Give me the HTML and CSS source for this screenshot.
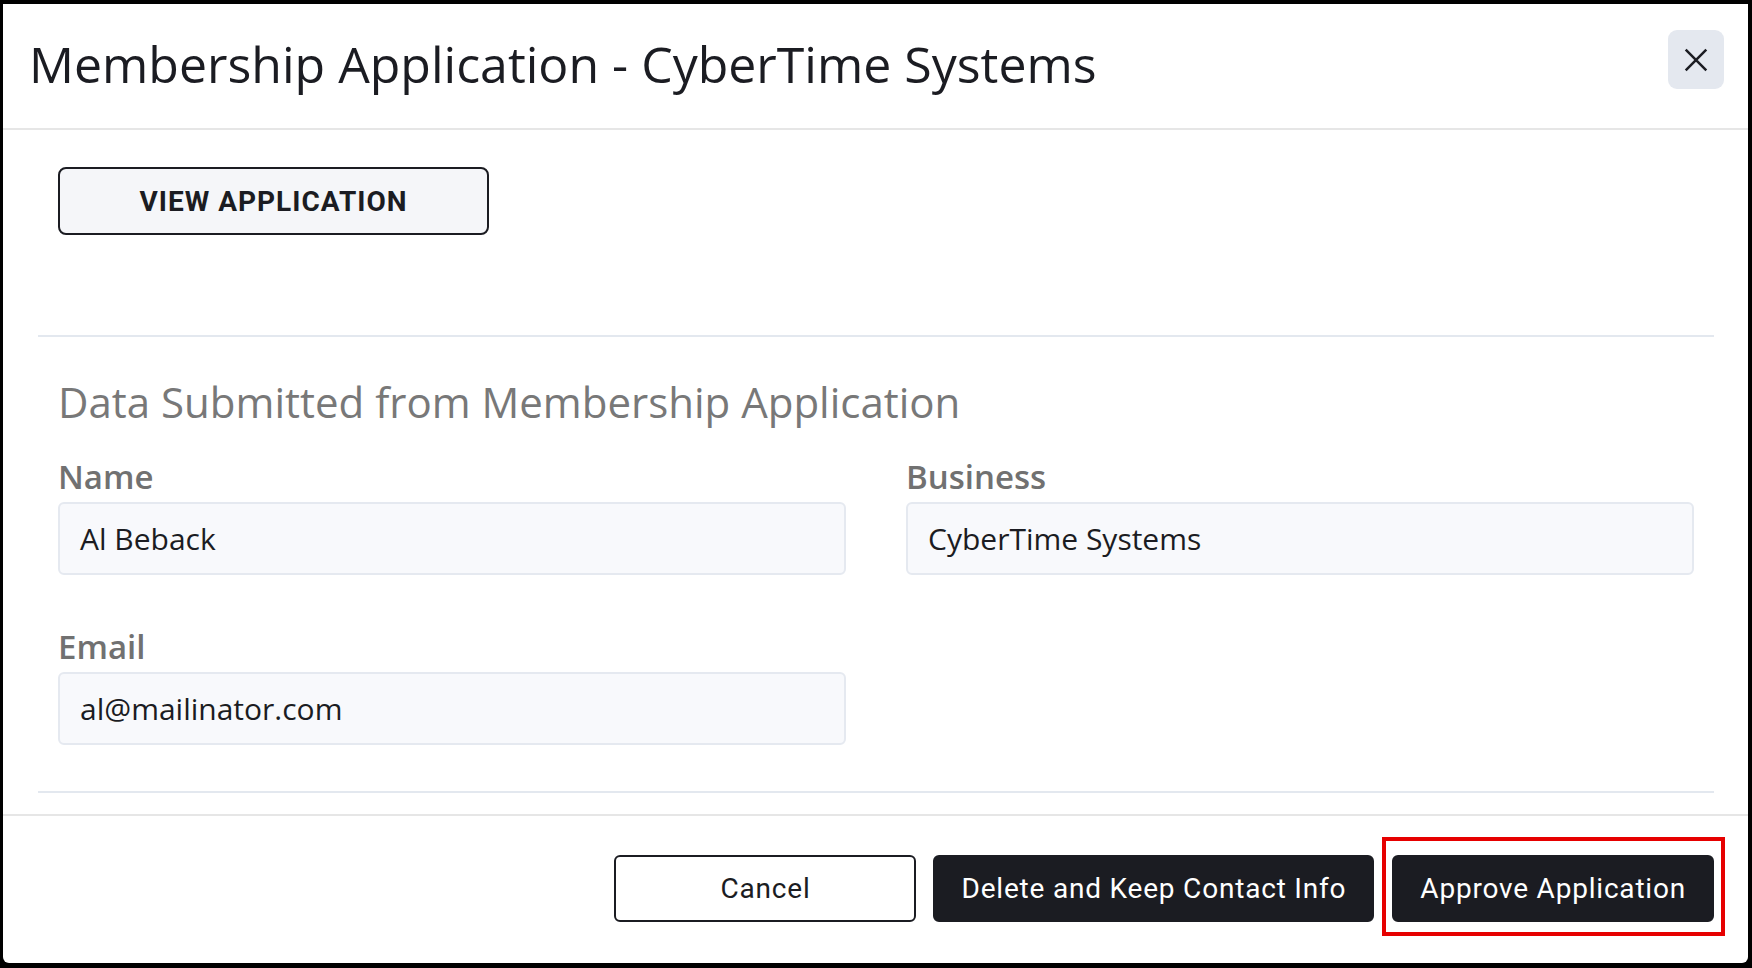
FILE: index.html
```html
<!DOCTYPE html>
<html lang="en">
  <head>
    <meta charset="UTF-8" />
    <meta name="viewport" content="width=device-width, initial-scale=1.0" />
    <title>Membership Application</title>
    <link rel="stylesheet" href="styles.css">
  </head>
  <body>
    <div class="dialog">
      <div class="dialog-header">
        <h1>Membership Application - CyberTime Systems</h1>
        <button class="close-btn" aria-label="Close">
          <svg width="26" height="26" viewBox="0 0 24 24" fill="none" stroke="#1b1c22" stroke-width="2.3">
            <path d="M2.5 2.5 L21.5 21.5 M21.5 2.5 L2.5 21.5" />
          </svg>
        </button>
      </div>

      <div class="dialog-body">
        <div class="section">
          <button class="outline-btn">VIEW APPLICATION</button>
        </div>

        <div class="section data-section">
          <h2>Data Submitted from Membership Application</h2>
          <div class="fields">
            <div class="field">
              <label>Name</label>
              <div class="field-value">Al Beback</div>
            </div>
            <div class="field">
              <label>Business</label>
              <div class="field-value">CyberTime Systems</div>
            </div>
            <div class="field">
              <label>Email</label>
              <div class="field-value">al@mailinator.com</div>
            </div>
          </div>
        </div>
      </div>

      <div class="dialog-footer">
        <button class="btn btn-light">Cancel</button>
        <button class="btn btn-dark">Delete and Keep Contact Info</button>
        <span class="highlight">
          <button class="btn btn-dark">Approve Application</button>
        </span>
      </div>
    </div>
  </body>
</html>
```

FILE: styles.css
```css
* {
  margin: 0;
  padding: 0;
  box-sizing: border-box;
}

body {
  background: #000;
  padding: 4px 4px 5px 3px;
  height: 100vh;
  font-family: 'Open Sans', 'Noto Sans', sans-serif;
}

.dialog {
  background: #fff;
  height: 100%;
  border-radius: 0 0 6px 6px;
  display: flex;
  flex-direction: column;
}

.dialog-header {
  display: flex;
  align-items: flex-start;
  justify-content: space-between;
  height: 126px;
  padding: 26px 24px 0 26px;
  border-bottom: 2px solid #e6e6e6;
}

.dialog-header h1 {
  font-size: 50px;
  font-weight: 400;
  color: #1b1c22;
}

.close-btn {
  width: 56px;
  height: 59px;
  border: none;
  border-radius: 9px;
  background: #e4e8ef;
  display: flex;
  align-items: center;
  justify-content: center;
}

.dialog-body {
  flex: 1;
  padding: 0 34px 0 35px;
}

.section {
  padding: 37px 20px 0 20px;
}

.outline-btn {
  width: 431px;
  height: 68px;
  border: 2px solid #1b1c22;
  border-radius: 8px;
  background: #f5f6f9;
  font-family: Roboto, sans-serif;
  font-weight: 700;
  font-size: 28px;
  letter-spacing: 1px;
  color: #1b1c22;
  margin-bottom: 100px;
}

.data-section {
  border-top: 2px solid #e3e8ef;
  border-bottom: 2px solid #e3e8ef;
  padding-top: 36px;
  padding-bottom: 46px;
}

.data-section h2 {
  font-size: 42px;
  font-weight: 400;
  color: #787878;
  margin-bottom: 24px;
}

.fields {
  display: grid;
  grid-template-columns: 1fr 1fr;
  column-gap: 60px;
  row-gap: 49px;
}

.field label {
  display: block;
  font-size: 33px;
  font-weight: 600;
  color: #717171;
  margin-bottom: 3px;
}

.field-value {
  height: 73px;
  padding: 0 20px;
  display: flex;
  align-items: center;
  background: #f8f9fc;
  border: 2px solid #e5e9f0;
  border-radius: 6px;
  font-size: 30px;
  color: #1b1c22;
}

.dialog-footer {
  display: flex;
  justify-content: flex-end;
  align-items: center;
  gap: 17px;
  height: 149px;
  padding: 0 34px 2px 0;
  border-top: 2px solid #e6e6e6;
}

.btn {
  height: 67px;
  padding: 0 26px;
  border-radius: 6px;
  font-family: Roboto, sans-serif;
  font-size: 28px;
  letter-spacing: 0.8px;
}

.btn-light {
  width: 302px;
  background: #fff;
  border: 2px solid #1b1c22;
  color: #1b1c22;
}

.btn-dark {
  background: #1b1c22;
  border: 2px solid #1b1c22;
  color: #fff;
}

/* red annotation frame drawn over the approve button */
.highlight {
  position: relative;
  display: flex;
  margin-left: 1px;
}

.highlight::after {
  content: "";
  position: absolute;
  top: -18px;
  right: -11px;
  bottom: -14px;
  left: -10px;
  border: 4px solid #e60000;
  pointer-events: none;
}
```
